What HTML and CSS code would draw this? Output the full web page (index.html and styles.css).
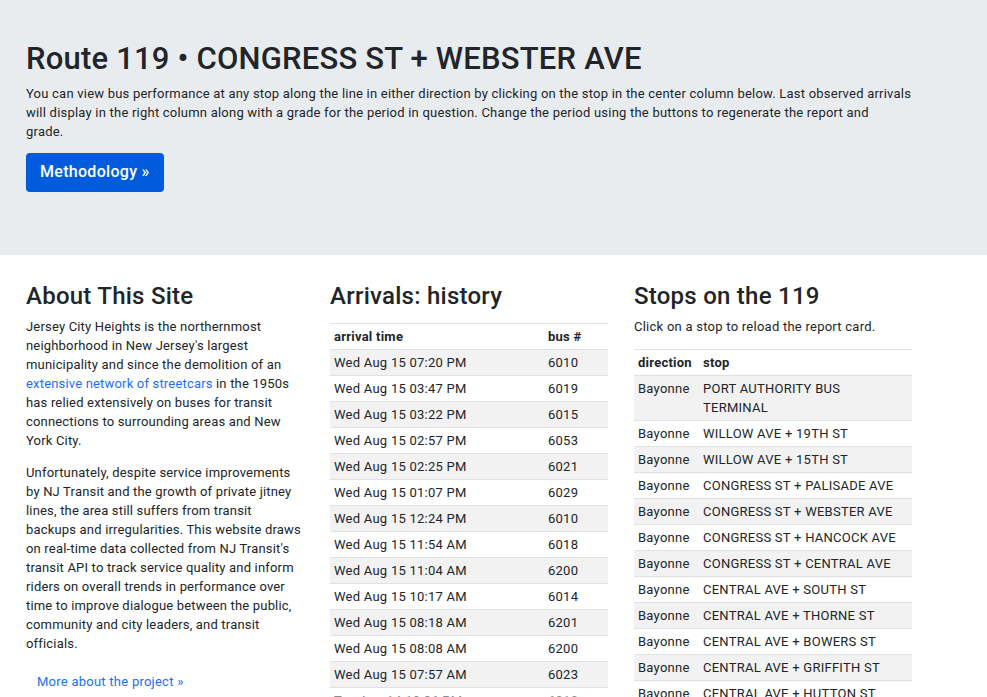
FILE: index.html
```html
<!DOCTYPE html>
<html lang="en">
<head>
<meta charset="utf-8">
<title>Route 119 • CONGRESS ST + WEBSTER AVE</title>
<link rel="stylesheet" href="styles.css">
</head>
<body>
<header class="jumbotron">
  <div class="container">
    <h1 class="title">Route 119 • CONGRESS ST + WEBSTER AVE</h1>
    <p class="lead">You can view bus performance at any stop along the line in either direction by clicking on the stop in the center column below. Last observed arrivals will display in the right column along with a grade for the period in question. Change the period using the buttons to regenerate the report and<br>grade.</p>
    <a class="btn-primary" href="#">Methodology »</a>
  </div>
</header>
<main class="container">
  <div class="grid">
    <section class="col">
      <h2 class="heading">About This Site</h2>
      <p class="text about">Jersey City Heights is the northernmost neighborhood in New Jersey's largest municipality and since the demolition of an <a class="link" href="#">extensive network of streetcars</a> in the 1950s has relied extensively on buses for transit connections to surrounding areas and New York City.</p>
      <p class="text about">Unfortunately, despite service improvements by NJ Transit and the growth of private jitney lines, the area still suffers from transit backups and irregularities. This website draws on real-time data collected from NJ Transit's transit API to track service quality and inform riders on overall trends in performance over time to improve dialogue between the public, community and city leaders, and transit officials.</p>
      <a class="btn-link" href="#">More about the project »</a>
    </section>
    <section class="col">
      <h2 class="heading">Arrivals: history</h2>
      <table class="table table-arrivals">
        <thead><tr><th>arrival time</th><th class="bus-col">bus #</th></tr></thead>
        <tbody>
          <tr><td>Wed Aug 15 07:20 PM</td><td>6010</td></tr>
          <tr><td>Wed Aug 15 03:47 PM</td><td>6019</td></tr>
          <tr><td>Wed Aug 15 03:22 PM</td><td>6015</td></tr>
          <tr><td>Wed Aug 15 02:57 PM</td><td>6053</td></tr>
          <tr><td>Wed Aug 15 02:25 PM</td><td>6021</td></tr>
          <tr><td>Wed Aug 15 01:07 PM</td><td>6029</td></tr>
          <tr><td>Wed Aug 15 12:24 PM</td><td>6010</td></tr>
          <tr><td>Wed Aug 15 11:54 AM</td><td>6018</td></tr>
          <tr><td>Wed Aug 15 11:04 AM</td><td>6200</td></tr>
          <tr><td>Wed Aug 15 10:17 AM</td><td>6014</td></tr>
          <tr><td>Wed Aug 15 08:18 AM</td><td>6201</td></tr>
          <tr><td>Wed Aug 15 08:08 AM</td><td>6200</td></tr>
          <tr><td>Wed Aug 15 07:57 AM</td><td>6023</td></tr>
          <tr class="faded"><td>Tue Aug 14 10:36 PM</td><td>6010</td></tr>
          <tr class="faded"><td>Tue Aug 14 09:41 PM</td><td>6019</td></tr>
        </tbody>
      </table>
    </section>
    <section class="col">
      <h2 class="heading">Stops on the 119</h2>
      <p class="text">Click on a stop to reload the report card.</p>
      <table class="table table-stops">
        <thead><tr><th class="dir-col">direction</th><th>stop</th></tr></thead>
        <tbody>
          <tr><td>Bayonne</td><td class="stop">PORT AUTHORITY BUS TERMINAL</td></tr>
          <tr><td>Bayonne</td><td class="stop">WILLOW AVE + 19TH ST</td></tr>
          <tr><td>Bayonne</td><td class="stop">WILLOW AVE + 15TH ST</td></tr>
          <tr><td>Bayonne</td><td class="stop">CONGRESS ST + PALISADE AVE</td></tr>
          <tr><td>Bayonne</td><td class="stop">CONGRESS ST + WEBSTER AVE</td></tr>
          <tr><td>Bayonne</td><td class="stop">CONGRESS ST + HANCOCK AVE</td></tr>
          <tr><td>Bayonne</td><td class="stop">CONGRESS ST + CENTRAL AVE</td></tr>
          <tr><td>Bayonne</td><td class="stop">CENTRAL AVE + SOUTH ST</td></tr>
          <tr><td>Bayonne</td><td class="stop">CENTRAL AVE + THORNE ST</td></tr>
          <tr><td>Bayonne</td><td class="stop">CENTRAL AVE + BOWERS ST</td></tr>
          <tr><td>Bayonne</td><td class="stop">CENTRAL AVE + GRIFFITH ST</td></tr>
          <tr><td>Bayonne</td><td class="stop">CENTRAL AVE + HUTTON ST</td></tr>
          <tr><td>Bayonne</td><td class="stop">CENTRAL AVE + MANHATTAN AVE</td></tr>
        </tbody>
      </table>
    </section>
  </div>
</main>
</body>
</html>
```
FILE: styles.css
```css
* { box-sizing: border-box; }
html, body { margin: 0; padding: 0; }
body {
  font-family: Roboto, "Liberation Sans", sans-serif;
  font-size: 13px;
  line-height: 19px;
  letter-spacing: 0.25px;
  color: #212529;
  background: #fff;
}
.container {
  width: 952px;
  padding: 0 26px;
}
.jumbotron {
  background: #e9ecef;
  padding: 40px 0 63px;
}
.title {
  margin: 0 0 7px;
  font-size: 31px;
  line-height: 37px;
  font-weight: 500;
  letter-spacing: 0.2px;
}
.lead { margin: 0 0 12px; letter-spacing: 0.22px; }
.btn-primary {
  display: inline-block;
  background: #005cdc;
  color: #fff;
  text-decoration: none;
  font-size: 16px;
  font-weight: 500;
  line-height: 24px;
  letter-spacing: 0.3px;
  padding: 7px 14px 8px;
  border-radius: 4px;
}
main.container { padding-top: 27px; }
.grid {
  display: grid;
  grid-template-columns: repeat(3, 278px);
  column-gap: 26px;
}
.heading {
  margin: 0 0 6px;
  font-size: 24px;
  line-height: 29px;
  font-weight: 500;
  letter-spacing: 0.25px;
}
.text { margin: 0 0 13px; }
.text.about { letter-spacing: 0.18px; }
.link { color: #1a6ff5; text-decoration: none; }
.btn-link {
  display: inline-block;
  color: #1a6ff5;
  text-decoration: none;
  padding: 6px 11px;
}
.table {
  width: 100%;
  border-collapse: collapse;
  margin: 0;
}
.table-arrivals { margin-top: 12px; }
.table th, .table td {
  text-align: left;
  vertical-align: top;
  padding: 3px 4px;
  border-top: 1px solid #dee2e6;
}
.table th { font-weight: 700; }
.table tbody tr:nth-child(odd) { background: #f2f2f2; }
.bus-col { width: 64px; }
.dir-col { width: 65px; }
.table td.stop { padding-right: 10px; }
.faded td { color: #8a8e92; }
```
